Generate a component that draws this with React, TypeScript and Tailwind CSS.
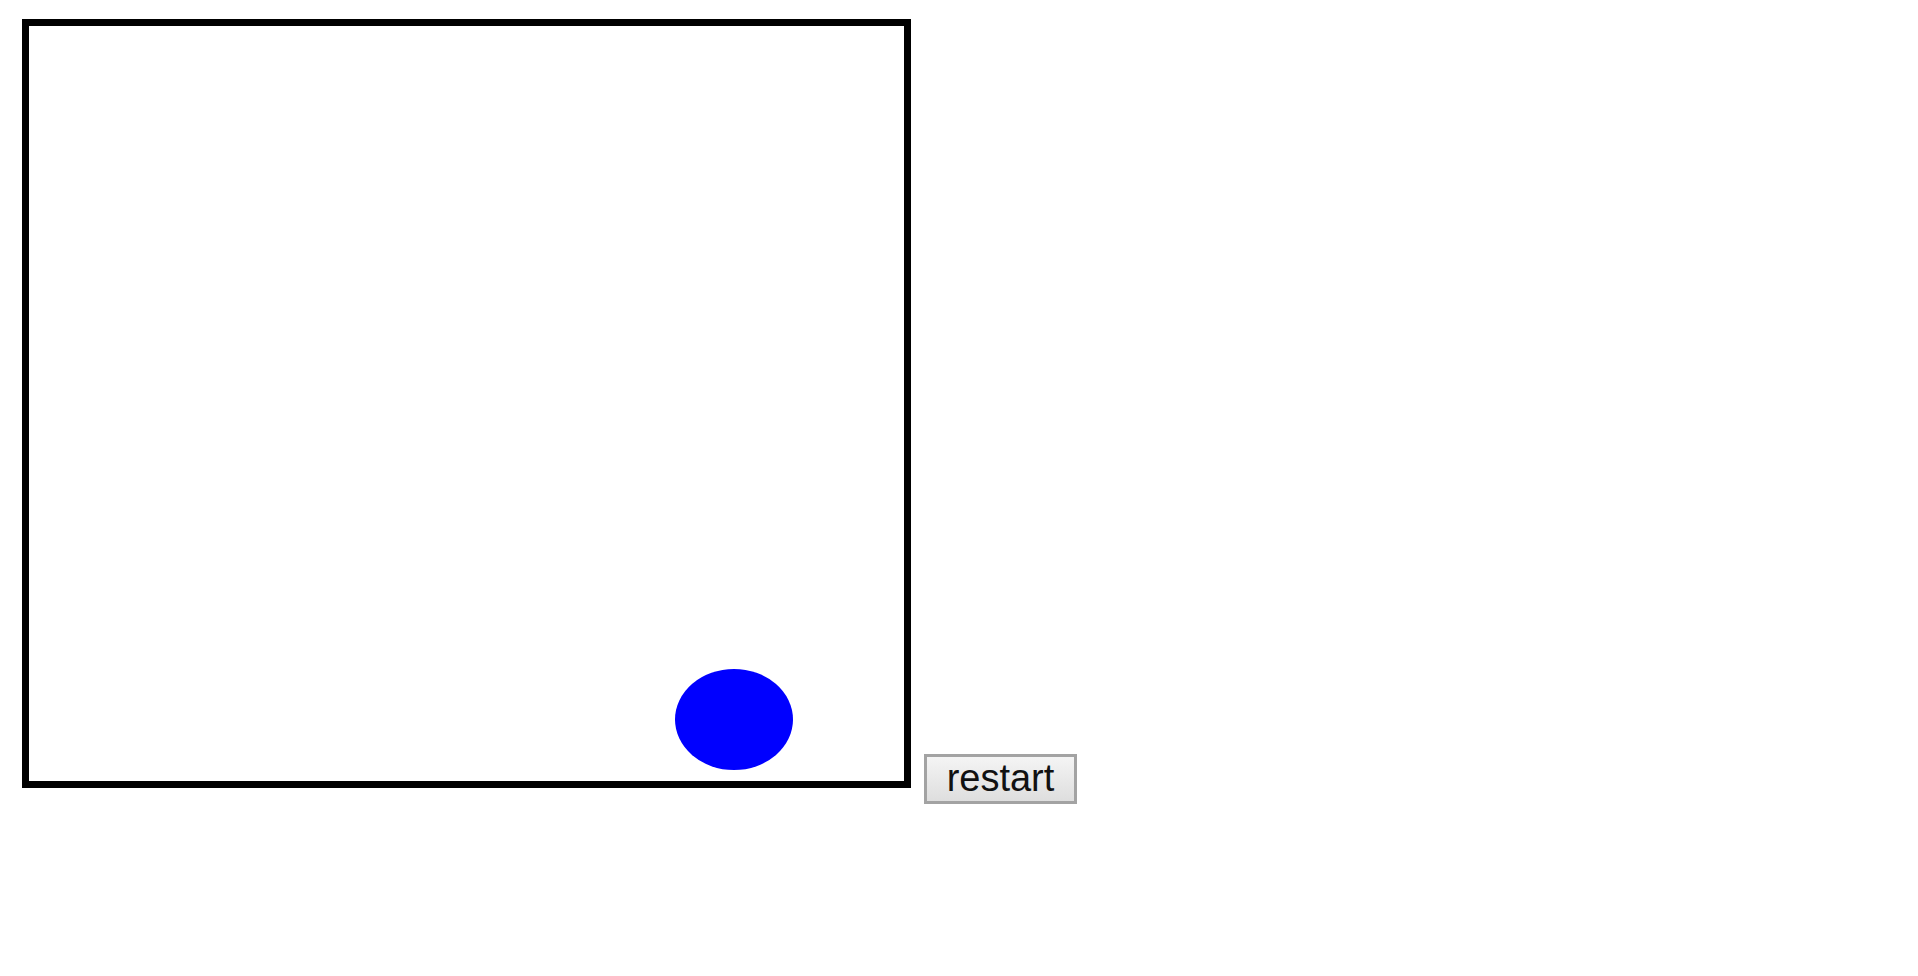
export default function App() {
  return (
    <div className="min-h-screen w-full bg-white" style={{ fontFamily: "Arial" }}>
      <div className="flex items-end pl-[22px] pt-[19px]">
        {/* game area */}
        <div className="relative h-[769px] w-[889px] shrink-0 border-[7px] border-black bg-white">
          <div className="absolute left-[646px] top-[643px] h-[101px] w-[118px] rounded-[50%] bg-[#0000ff]" />
        </div>
        <button className="mb-[-16px] ml-[13px] flex h-[50px] w-[153px] items-center justify-center border-[3px] border-[#a3a3a3] bg-gradient-to-b from-[#f4f4f4] to-[#dedede] pb-[2px] text-[38px] leading-none text-[#111] [font-family:'Liberation_Sans',Arial,sans-serif]">
          restart
        </button>
      </div>
    </div>
  )
}
